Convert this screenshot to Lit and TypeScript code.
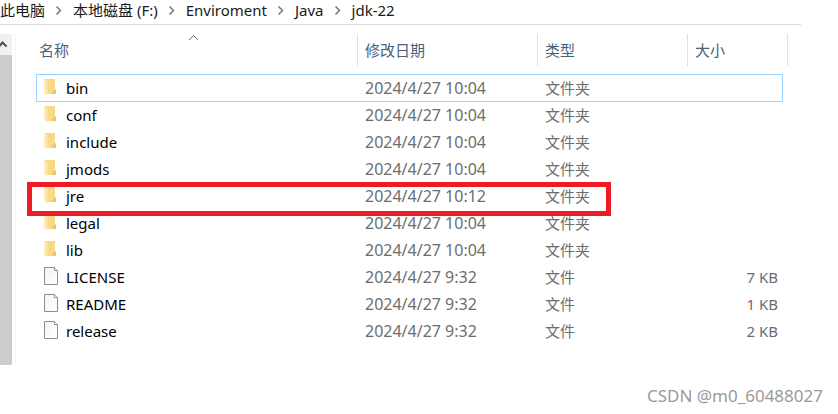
import { LitElement, html, css, svg, nothing } from "lit";
import { customElement, property } from "lit/decorators.js";

interface Entry {
  name: string;
  date: string;
  kind: "folder" | "file";
  size?: string;
  focused?: boolean;
  marked?: boolean;
}

const PATH = ["此电脑", "本地磁盘 (F:)", "Enviroment", "Java", "jdk-22"];

const ENTRIES: Entry[] = [
  { name: "bin", date: "2024/4/27 10:04", kind: "folder", focused: true },
  { name: "conf", date: "2024/4/27 10:04", kind: "folder" },
  { name: "include", date: "2024/4/27 10:04", kind: "folder" },
  { name: "jmods", date: "2024/4/27 10:04", kind: "folder" },
  { name: "jre", date: "2024/4/27 10:12", kind: "folder", marked: true },
  { name: "legal", date: "2024/4/27 10:04", kind: "folder" },
  { name: "lib", date: "2024/4/27 10:04", kind: "folder" },
  { name: "LICENSE", date: "2024/4/27 9:32", kind: "file", size: "7 KB" },
  { name: "README", date: "2024/4/27 9:32", kind: "file", size: "1 KB" },
  { name: "release", date: "2024/4/27 9:32", kind: "file", size: "2 KB" },
];

@customElement("entry-icon")
class EntryIcon extends LitElement {
  @property() kind: "folder" | "file" = "folder";

  static styles = css`
    :host { display: block; width: 16px; height: 20px; flex: none; }
    svg { display: block; }
  `;

  render() {
    const folder = svg`
      <defs>
        <linearGradient id="back" x1="0" y1="0" x2="0" y2="1">
          <stop offset="0" stop-color="#f6d783"></stop>
          <stop offset="1" stop-color="#f8dc8c"></stop>
        </linearGradient>
        <linearGradient id="flap" x1="0" y1="0" x2="1" y2="0">
          <stop offset="0" stop-color="#fff0c4"></stop>
          <stop offset="1" stop-color="#fbe09a"></stop>
        </linearGradient>
      </defs>
      <path d="M1 1H11V11L12 12V16H3Z" fill="url(#back)"></path>
      <path d="M11 11L12 12V16H8V14Z" fill="#efc862"></path>
      <path d="M0 1L4 3V16L3 17L0 15Z" fill="url(#flap)"></path>`;
    const file = svg`
      <defs>
        <linearGradient id="sheet" x1="0" y1="0" x2="1" y2="1">
          <stop offset="0" stop-color="#f2f4f4"></stop>
          <stop offset="1" stop-color="#ffffff"></stop>
        </linearGradient>
      </defs>
      <path d="M0.5 0.5H10.5L13.5 3.5V17.5H0.5Z" fill="url(#sheet)" stroke="#8c8f90"></path>
      <path d="M10.5 0.5V3.5H13.5" fill="#fff" stroke="#8c8f90"></path>`;
    return html`<svg width="16" height="20" viewBox="0 0 16 20" aria-hidden="true">
      ${this.kind === "folder" ? folder : file}
    </svg>`;
  }
}

@customElement("app-root")
class AppRoot extends LitElement {
  static styles = css`
    * { box-sizing: border-box; }
    :host {
      display: flex;
      flex-direction: column;
      min-height: 100vh;
      background: #fff;
      overflow-x: hidden;
      font: 15px/20px "Noto Sans", "Noto Sans CJK SC", sans-serif;
      color: #000;
    }
    .path {
      display: flex;
      align-items: center;
      height: 25px;
      margin-right: 37px;
      padding-bottom: 4px;
      border-bottom: 1px solid #d9d9d9;
      white-space: nowrap;
    }
    .path a { color: #1a1a1a; text-decoration: none; }
    .path svg { flex: none; width: 28px; height: 12px; }
    .body { display: flex; margin-top: 9px; }
    .bar { width: 12px; flex: none; background: #cdcdcd; }
    .up {
      display: block;
      width: 12px;
      height: 21px;
      padding: 0;
      border: 0;
      background: #f0f0f0;
    }
    .up svg { display: block; }
    .list {
      flex: 1;
      min-width: 0;
      margin-left: 3px;
      padding: 0 50px 20px 20px;
      border-left: 1px solid #f3f3f3;
    }
    table {
      width: 100%;
      table-layout: fixed;
      border-collapse: separate;
      border-spacing: 0;
    }
    .c-date { width: 180px; }
    .c-type { width: 150px; }
    .c-size { width: 95px; }
    .c-end { width: 5px; }
    th {
      position: relative;
      height: 32px;
      padding: 0 7px;
      border-right: 1px solid #e2e2e2;
      font-weight: 400;
      text-align: left;
      color: #4c607a;
    }
    th:first-child { padding-left: 3px; }
    .sort { position: absolute; top: 0; left: calc(50% - 8px); }
    .gap td { height: 9px; padding: 0; }
    td { height: 27px; padding: 0 7px 2px; color: #6d6d6d; }
    td.name { padding-left: 8px; color: #000; }
    .label { display: flex; align-items: center; gap: 6px; }
    td.date { font-size: 16px; }
    td.size { padding-right: 5px; text-align: right; }
    .focused td { box-shadow: 0 -1px #99d1ff, inset 0 -1px #99d1ff; }
    .focused td.name { box-shadow: 0 -1px #99d1ff, inset 1px -1px #99d1ff; }
    .focused td.size { box-shadow: 0 -1px #99d1ff, inset -1px -1px #99d1ff; }
    .focused td.end { box-shadow: none; }
    .marked { position: relative; }
    .mark {
      position: absolute;
      z-index: 1;
      top: -1px;
      left: -9px;
      right: 177px;
      height: 34px;
      border: 5px solid #ed1c24;
      pointer-events: none;
    }
    .credit {
      margin: auto 15px 8px auto;
      font-size: 17px;
      color: #9a9a9a;
    }
  `;

  private row(e: Entry) {
    const cls = e.focused ? "focused" : e.marked ? "marked" : "";
    return html`<tr class=${cls}>
      <td class="name">
        <div class="label"><entry-icon kind=${e.kind}></entry-icon><span>${e.name}</span></div>
        ${e.marked ? html`<div class="mark"></div>` : nothing}
      </td>
      <td class="date">${e.date}</td>
      <td>${e.kind === "folder" ? "文件夹" : "文件"}</td>
      <td class="size">${e.size ?? nothing}</td>
      <td class="end"></td>
    </tr>`;
  }

  render() {
    return html`
      <nav class="path">
        ${PATH.map(
          (p, i) => html`${i
              ? html`<svg viewBox="0 0 28 12" aria-hidden="true">
                  <path d="M11.5 2.5L15.5 6.5L11.5 10.5" fill="none" stroke="#767676" stroke-width="1.5"></path>
                </svg>`
              : nothing}<a href="#">${p}</a>`
        )}
      </nav>
      <div class="body">
        <div class="bar">
          <button class="up" aria-label="向上滚动">
            <svg width="12" height="21" viewBox="0 0 12 21" aria-hidden="true">
              <path d="M-1 12.5L2.5 8.5L6.5 12.5" fill="none" stroke="#505050" stroke-width="2"></path>
            </svg>
          </button>
        </div>
        <main class="list">
          <table>
            <colgroup>
              <col /><col class="c-date" /><col class="c-type" /><col class="c-size" /><col class="c-end" />
            </colgroup>
            <thead>
              <tr>
                <th>
                  名称
                  <svg class="sort" width="12" height="8" viewBox="0 0 12 8" aria-hidden="true">
                    <path d="M1 6L5.5 1.5L10 6" fill="none" stroke="#6d6d6d"></path>
                  </svg>
                </th>
                <th>修改日期</th>
                <th>类型</th>
                <th colspan="2">大小</th>
              </tr>
            </thead>
            <tbody>
              <tr class="gap"><td colspan="5"></td></tr>
              ${ENTRIES.map((e) => this.row(e))}
            </tbody>
          </table>
        </main>
      </div>
      <footer class="credit">CSDN @m0_60488027</footer>
    `;
  }
}
